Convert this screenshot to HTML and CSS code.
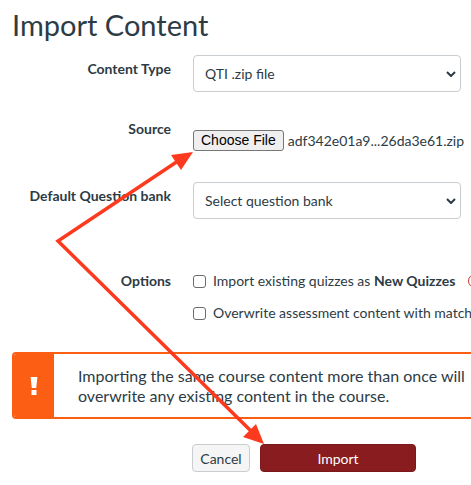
FILE: index.html
```html
<!DOCTYPE html>
<html lang="en">
<head>
<meta charset="utf-8">
<title>Import Content</title>
<link rel="stylesheet" href="styles.css">
</head>
<body>
<div class="page">
  <h1 class="title">Import Content</h1>

  <div class="row row-type">
    <div class="label pad">Content Type</div>
    <div class="control">
      <div class="select">
        <span>QTI .zip file</span>
        <svg class="chev" width="10" height="6" viewBox="0 0 10 6"><polyline points="1,1 5,5 9,1" fill="none" stroke="#2d3b45" stroke-width="2"/></svg>
      </div>
    </div>
  </div>

  <div class="row row-source">
    <div class="label">Source</div>
    <div class="control file">
      <span class="file-btn">Choose File</span>
      <span class="file-name">adf342e01a9...26da3e61.zip</span>
    </div>
  </div>

  <div class="row row-bank">
    <div class="label pad">Default Question bank</div>
    <div class="control">
      <div class="select">
        <span>Select question bank</span>
        <svg class="chev" width="10" height="6" viewBox="0 0 10 6"><polyline points="1,1 5,5 9,1" fill="none" stroke="#2d3b45" stroke-width="2"/></svg>
      </div>
    </div>
  </div>

  <div class="row row-options">
    <div class="label">Options</div>
    <div class="control options">
      <div class="check"><span class="box"></span><span class="check-text">Import existing quizzes as <b>New Quizzes</b></span><span class="info"></span></div>
      <div class="check"><span class="box"></span><span class="check-text">Overwrite assessment content with match</span></div>
    </div>
  </div>

  <div class="alert">
    <div class="alert-icon">
      <svg width="8" height="18" viewBox="0 0 8 18"><path d="M0.6 0 H7.4 L6.2 11 H1.8 Z" fill="#fff"/><rect x="1.5" y="13" width="5" height="5" fill="#fff"/></svg>
    </div>
    <div class="alert-text">Importing the same course content more than once will overwrite any existing content in the course.</div>
  </div>

  <div class="actions">
    <button class="btn btn-cancel">Cancel</button>
    <button class="btn btn-import">Import</button>
  </div>
</div>

<svg class="annot" width="471" height="485" viewBox="0 0 471 485">
  <polyline points="178,161 58,241 251,431" fill="none" stroke="#fd3a1e" stroke-width="3.5" stroke-linejoin="miter"/>
  <polygon points="193,152 171,155 181,170" fill="#fd3a1e"/>
  <polygon points="264,444 243,437 256,424" fill="#fd3a1e"/>
</svg>
</body>
</html>
```

FILE: styles.css
```css
html, body {
  margin: 0;
  padding: 0;
  overflow: hidden;
  background: #fff;
}
body {
  position: relative;
  width: 471px;
  height: 485px;
  font-family: Lato, "Noto Sans", sans-serif;
  color: #2d3b45;
}
.page {
  padding-left: 12px;
  width: 520px;
}
.title {
  margin: 8px 0 0;
  font-size: 29px;
  line-height: 34px;
  font-weight: 400;
  color: #2d3b45;
}
.row {
  display: grid;
  grid-template-columns: 159px 268px;
  column-gap: 22px;
  align-items: start;
}
.label {
  text-align: right;
  font-weight: 700;
  font-size: 14px;
  line-height: 20px;
  white-space: nowrap;
}
.label.pad { padding-top: 4px; }
.row-type { margin-top: 13px; }
.row-source { margin-top: 27px; }
.row-bank { margin-top: 31px; }
.row-options { margin-top: 52px; }

.select {
  box-sizing: border-box;
  height: 37px;
  border: 1px solid #c7cdd1;
  border-radius: 4px;
  background: #fff;
  display: flex;
  align-items: center;
  justify-content: space-between;
  padding: 0 4px 0 11px;
  font-size: 14px;
}
.chev { display: block; }

.file {
  display: flex;
  align-items: center;
  padding-top: 11px;
  white-space: nowrap;
}
.file-btn {
  box-sizing: border-box;
  height: 21px;
  line-height: 19px;
  padding: 0 7px;
  border: 1px solid #767676;
  border-radius: 3px;
  background: #efefef;
  color: #000;
  font-family: "Liberation Sans", Arial, sans-serif;
  font-size: 14px;
}
.file-name {
  margin-left: 4px;
  font-size: 14px;
}

.options {
  display: flex;
  flex-direction: column;
  gap: 12px;
  white-space: nowrap;
}
.check {
  display: flex;
  align-items: center;
  height: 20px;
  font-size: 14px;
  line-height: 20px;
}
.box {
  box-sizing: border-box;
  width: 13px;
  height: 13px;
  border: 1px solid #6b6b6b;
  border-radius: 3px;
  background: #fff;
  margin-right: 7px;
  flex: none;
}
.check-text b { font-weight: 700; }
.info {
  box-sizing: border-box;
  width: 14px;
  height: 14px;
  border: 1.5px solid #c9302c;
  border-radius: 50%;
  margin-left: 13px;
  flex: none;
}

.alert {
  margin-top: 29px;
  width: 500px;
  display: flex;
  border: 2px solid #fc5e13;
  border-radius: 4px;
  overflow: hidden;
}
.alert-icon {
  width: 40px;
  flex: none;
  background: #fc5e13;
  display: flex;
  align-items: center;
  justify-content: center;
}
.alert-icon svg { display: block; }
.alert-text {
  padding: 12px 24px 11px;
  font-size: 16px;
  line-height: 20px;
  background: #fff;
  width: 400px;
}

.actions {
  margin-top: 25px;
  margin-left: 180px;
  display: flex;
  gap: 10px;
}
.btn {
  box-sizing: border-box;
  height: 28px;
  border-radius: 4px;
  font-family: Lato, "Noto Sans", sans-serif;
  font-size: 14px;
  padding: 0;
  cursor: pointer;
}
.btn-cancel {
  width: 58px;
  background: #f5f5f5;
  border: 1px solid #c7cdd1;
  color: #2d3b45;
}
.btn-import {
  width: 156px;
  background: #891c1f;
  border: 1px solid #7a181b;
  color: #fff;
}

.annot {
  position: absolute;
  top: 0;
  left: 0;
  pointer-events: none;
}
```
